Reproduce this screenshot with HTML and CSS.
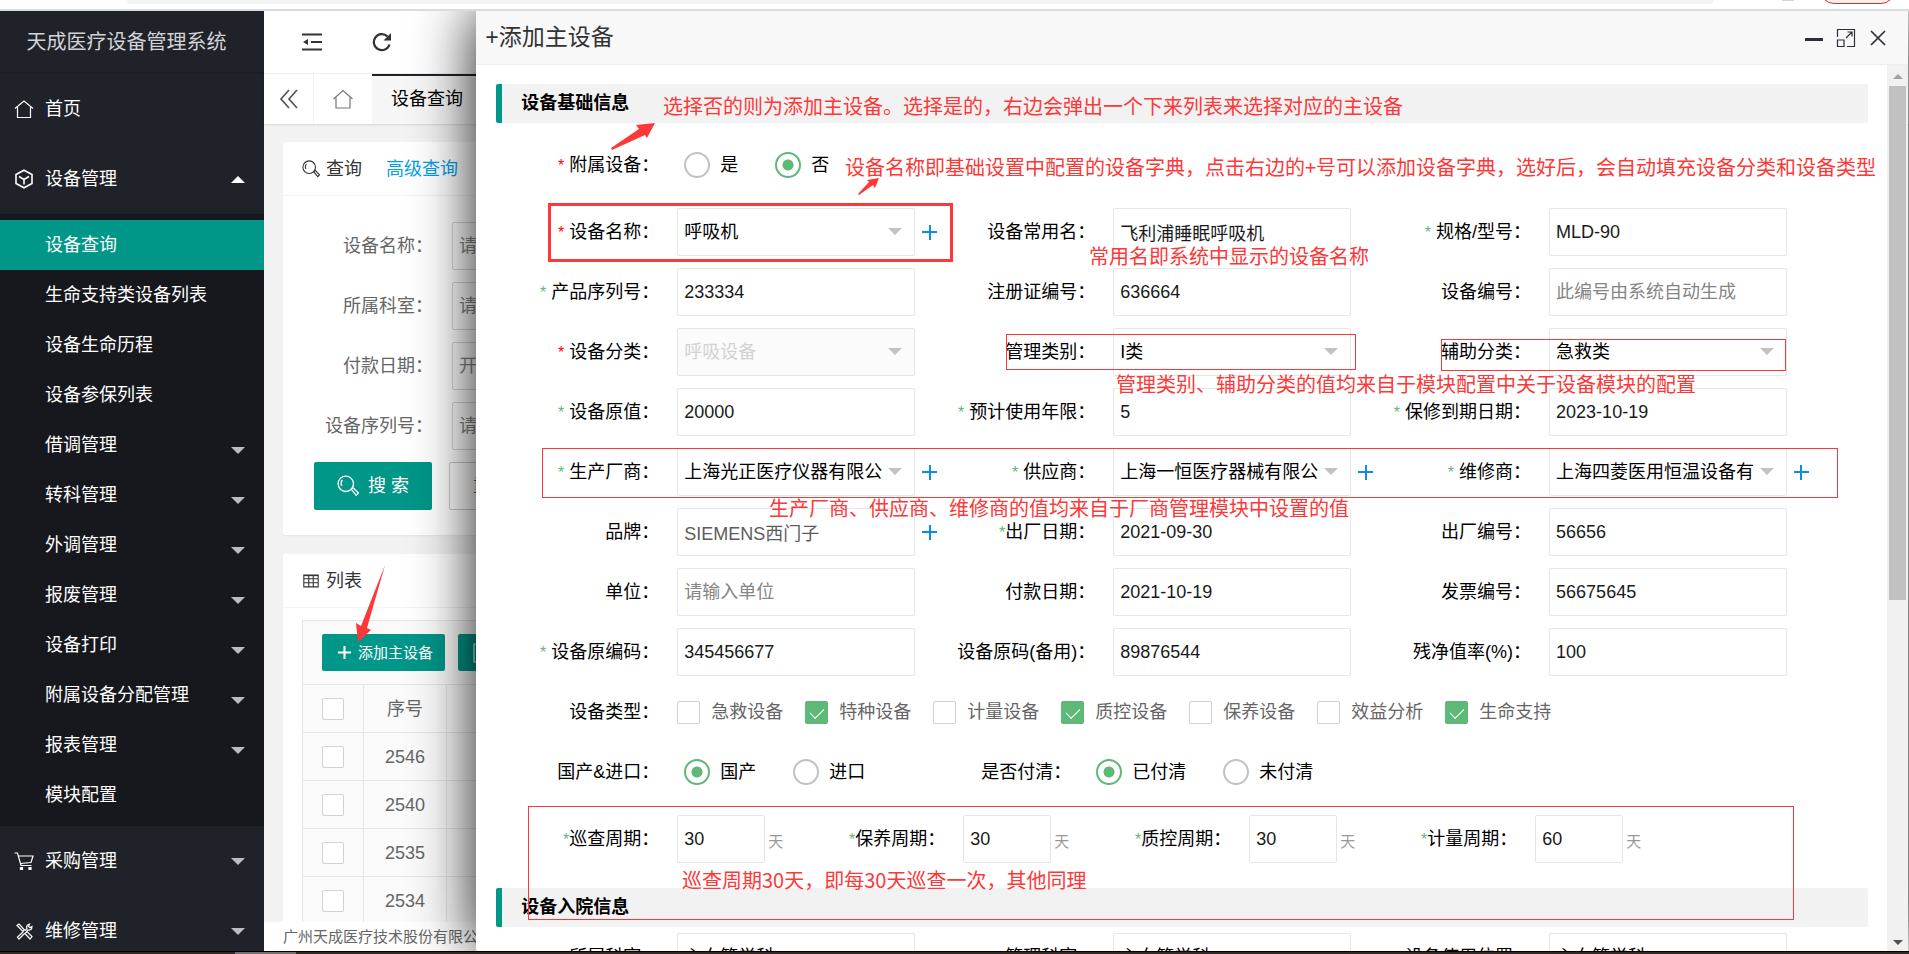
FILE: index.html
```html
<!DOCTYPE html>
<html lang="zh-CN">
<head>
<meta charset="utf-8">
<title>天成医疗设备管理系统</title>
<link rel="stylesheet" href="styles.css">
</head>
<body>
<div class="chrome"><span class="chrome-address"></span><span class="chrome-avatar"></span><span class="chrome-update"></span></div>

<div class="app">
  <aside class="sidebar">
    <h1 class="logo">天成医疗设备管理系统</h1>
    <nav>
      <a class="nav-item" href="#"><svg class="icon" viewBox="0 0 20 20"><path d="M1 9.500 10 2l9 7.500M3.500 8v10.500h13V8"/></svg><span>首页</span></a>
      <a class="nav-item" href="#"><svg class="icon icon-bold" viewBox="0 0 20 20"><path d="M10 1.200 18 5.500v9L10 18.800 2 14.500v-9zM5 7.500 10 10.500l5-3M10 10.500V15.500"/></svg><span>设备管理</span><i class="caret caret-up"></i></a>
      <div class="subnav">
        <a class="sub-item active" href="#">设备查询</a>
        <a class="sub-item" href="#">生命支持类设备列表</a>
        <a class="sub-item" href="#">设备生命历程</a>
        <a class="sub-item" href="#">设备参保列表</a>
        <a class="sub-item" href="#">借调管理<i class="caret"></i></a>
        <a class="sub-item" href="#">转科管理<i class="caret"></i></a>
        <a class="sub-item" href="#">外调管理<i class="caret"></i></a>
        <a class="sub-item" href="#">报废管理<i class="caret"></i></a>
        <a class="sub-item" href="#">设备打印<i class="caret"></i></a>
        <a class="sub-item" href="#">附属设备分配管理<i class="caret"></i></a>
        <a class="sub-item" href="#">报表管理<i class="caret"></i></a>
        <a class="sub-item" href="#">模块配置</a>
      </div>
      <a class="nav-item" href="#"><svg class="icon" viewBox="0 0 20 20"><path d="M.5 2h3l3.500 12.500h10.500M4.500 5h14.500l-2 6.500-10.500 1"/><path d="M6.500 16.500h2v2h-2zM15 16.500h2v2h-2z" fill="currentColor"/></svg><span>采购管理</span><i class="caret"></i></a>
      <a class="nav-item" href="#"><svg class="icon" viewBox="0 0 20 20"><path d="M3 4.500 5 3l5.500 6L9 10.500zM11 12.500l2-2 5 5-2 2.500zM9 11l-5.500 5 1.500 2 5.500-5.500M11 9.500l2-2c-1-2 0-4 2.500-4.500L14.500 5.500l1.500 1 2-1c0 3-2 4-4 3.500l-1.500 1.500"/></svg><span>维修管理</span><i class="caret"></i></a>
    </nav>
  </aside>

  <main class="main">
    <header class="topbar">
      <button class="icon-button" type="button" aria-label="收起菜单"><svg class="icon icon-dark" viewBox="0 0 20 20"><path d="M0 2.500h20M9 10h11M0 17.500h20"/><path d="M1 10l5-3v6z" fill="currentColor" stroke="none"/></svg></button>
      <button class="icon-button" type="button" aria-label="刷新"><svg class="icon icon-dark" viewBox="0 0 20 20"><path d="M17.500 12.500A8 8 0 1 1 15.500 4.500"/><path d="M19 1v7.500h-7.500z" fill="currentColor" stroke="none"/></svg></button>
    </header>
    <div class="tabs">
      <button class="tab-arrow" type="button" aria-label="向左"><svg class="icon icon-mid" viewBox="0 0 20 20"><path d="M10 1 2 10l8 9M18 1l-8 9 8 9"/></svg></button>
      <a class="tab-home" href="#" aria-label="首页"><svg class="icon" viewBox="0 0 20 20"><path d="M.5 10 10 1.500l9.500 8.500M3 8.500V19h14V8.500"/></svg></a>
      <a class="tab-current" href="#">设备查询</a>
    </div>
    <div class="content">
      <section class="card">
        <div class="card-head"><svg class="icon icon-small" viewBox="0 0 20 20"><circle cx="8" cy="8" r="7"/><path d="M4.500 10A4.500 4.500 0 0 1 5 4.500M13 13l1.500-1.500 5 5-2 2z"/></svg><span>查询</span><a class="card-link" href="#">高级查询</a></div>
        <form class="search-form">
          <div class="search-row"><label for="q1">设备名称：</label><input id="q1" class="input" placeholder="请输入设备名称"></div>
          <div class="search-row"><label for="q2">所属科室：</label><input id="q2" class="input" placeholder="请选择科室"></div>
          <div class="search-row"><label for="q3">付款日期：</label><input id="q3" class="input" placeholder="开始日期"></div>
          <div class="search-row"><label for="q4">设备序列号：</label><input id="q4" class="input" placeholder="请输入序列号"></div>
          <div class="search-actions">
            <button class="button" type="button"><svg class="icon icon-search" viewBox="0 0 20 20"><circle cx="8" cy="8" r="7"/><path d="M4.500 10A4.500 4.500 0 0 1 5 4.500M13 13l1.500-1.500 5 5-2 2z"/></svg>搜 索</button>
            <button class="button button-plain" type="button">重 置</button>
          </div>
        </form>
      </section>
      <section class="card">
        <div class="card-head"><svg class="icon icon-small" viewBox="0 0 20 20"><path d="M2 3.500h16v13H2zM2 7.500h16M2 12h16M7.500 4v12.500M12.500 4v12.500"/><path d="M2 4h16"/></svg><span>列表</span></div>
        <div class="grid">
          <div class="grid-tools">
            <button class="button button-small" type="button"><svg class="icon icon-tool icon-dark" viewBox="0 0 16 16"><path d="M8 1v14M1 8h14"/></svg>添加主设备</button>
            <button class="button button-small" type="button"><svg class="icon icon-copy" viewBox="0 0 16 20"><path d="M12 17v2H1V1h9v3M5 4h10v13H5z"/></svg>复制</button>
          </div>
          <table class="grid-table">
            <thead><tr><th class="col-check"><input class="check" type="checkbox" aria-label="全选"></th><th class="col-no">序号</th><th></th></tr></thead>
            <tbody>
              <tr><td><input class="check" type="checkbox" aria-label="2546"></td><td>2546</td><td></td></tr>
              <tr><td><input class="check" type="checkbox" aria-label="2540"></td><td>2540</td><td></td></tr>
              <tr><td><input class="check" type="checkbox" aria-label="2535"></td><td>2535</td><td></td></tr>
              <tr><td><input class="check" type="checkbox" aria-label="2534"></td><td>2534</td><td></td></tr>
            </tbody>
          </table>
        </div>
      </section>
    </div>
    <footer class="footer">广州天成医疗技术股份有限公司</footer>
  </main>

  <section class="dialog" role="dialog" aria-labelledby="dialog-title">
    <header class="dialog-head">
      <h2 id="dialog-title">+添加主设备</h2>
      <div class="dialog-controls">
        <button type="button" aria-label="最小化"><svg class="icon icon-thick" viewBox="0 0 20 20"><path d="M1 11.500h18"/></svg></button>
        <button type="button" aria-label="最大化"><svg class="icon" viewBox="0 0 20 20"><path d="M1.500 9V1.500h17v17H11M1.500 12H8v6.500H1.500zM10 10l6-6M11.500 4H16v4.500"/></svg></button>
        <button type="button" aria-label="关闭"><svg class="icon icon-mid" viewBox="0 0 20 20"><path d="M3 3l14 14M17 3 3 17"/></svg></button>
      </div>
    </header>
    <div class="dialog-body">
      <form class="form">
        <h3 class="section-title">设备基础信息</h3>
        <div class="row row-first">
          <span class="label"><i class="star">*</i> 附属设备：</span>
          <div class="options">
            <label class="option"><input class="radio" type="radio" name="attached">是</label>
            <label class="option"><input class="radio" type="radio" name="attached" checked>否</label>
          </div>
        </div>
        <div class="fields">
          <div class="field"><label class="label" for="f1"><i class="star">*</i> 设备名称：</label><span class="select"><select id="f1"><option>呼吸机</option></select></span><button class="plus" type="button" aria-label="添加"></button></div>
          <div class="field"><label class="label" for="f2">设备常用名：</label><input id="f2" class="input" value="飞利浦睡眠呼吸机"></div>
          <div class="field"><label class="label" for="f3"><i class="star star-green">*</i> 规格/型号：</label><input id="f3" class="input" value="MLD-90"></div>

          <div class="field"><label class="label" for="f4"><i class="star star-green">*</i> 产品序列号：</label><input id="f4" class="input" value="233334"></div>
          <div class="field"><label class="label" for="f5">注册证编号：</label><input id="f5" class="input" value="636664"></div>
          <div class="field"><label class="label" for="f6">设备编号：</label><input id="f6" class="input" placeholder="此编号由系统自动生成"></div>

          <div class="field"><label class="label" for="f7"><i class="star">*</i> 设备分类：</label><span class="select"><select id="f7" disabled><option>呼吸设备</option></select></span></div>
          <div class="field"><label class="label" for="f8">管理类别：</label><span class="select"><select id="f8"><option>I类</option></select></span></div>
          <div class="field"><label class="label" for="f9">辅助分类：</label><span class="select"><select id="f9"><option>急救类</option></select></span></div>

          <div class="field"><label class="label" for="f10"><i class="star star-green">*</i> 设备原值：</label><input id="f10" class="input" value="20000"></div>
          <div class="field"><label class="label" for="f11"><i class="star star-green">*</i> 预计使用年限：</label><input id="f11" class="input" value="5"></div>
          <div class="field"><label class="label" for="f12"><i class="star star-green">*</i> 保修到期日期：</label><input id="f12" class="input" value="2023-10-19"></div>

          <div class="field"><label class="label" for="f13"><i class="star star-green">*</i> 生产厂商：</label><span class="select"><select id="f13"><option>上海光正医疗仪器有限公</option></select></span><button class="plus" type="button" aria-label="添加"></button></div>
          <div class="field"><label class="label" for="f14"><i class="star star-green">*</i> 供应商：</label><span class="select"><select id="f14"><option>上海一恒医疗器械有限公</option></select></span><button class="plus" type="button" aria-label="添加"></button></div>
          <div class="field"><label class="label" for="f15"><i class="star star-green">*</i> 维修商：</label><span class="select"><select id="f15"><option>上海四菱医用恒温设备有</option></select></span><button class="plus" type="button" aria-label="添加"></button></div>

          <div class="field"><label class="label" for="f16">品牌：</label><input id="f16" class="input input-brand" value="SIEMENS西门子"><button class="plus" type="button" aria-label="添加"></button></div>
          <div class="field"><label class="label" for="f17"><i class="star star-green">*</i>出厂日期：</label><input id="f17" class="input" value="2021-09-30"></div>
          <div class="field"><label class="label" for="f18">出厂编号：</label><input id="f18" class="input" value="56656"></div>

          <div class="field"><label class="label" for="f19">单位：</label><input id="f19" class="input" placeholder="请输入单位"></div>
          <div class="field"><label class="label" for="f20">付款日期：</label><input id="f20" class="input" value="2021-10-19"></div>
          <div class="field"><label class="label" for="f21">发票编号：</label><input id="f21" class="input" value="56675645"></div>

          <div class="field"><label class="label" for="f22"><i class="star star-green">*</i> 设备原编码：</label><input id="f22" class="input" value="345456677"></div>
          <div class="field"><label class="label" for="f23">设备原码(备用)：</label><input id="f23" class="input" value="89876544"></div>
          <div class="field"><label class="label" for="f24">残净值率(%)：</label><input id="f24" class="input" value="100"></div>
        </div>
        <div class="row">
          <span class="label">设备类型：</span>
          <div class="checks">
            <label><input class="check" type="checkbox">急救设备</label>
            <label><input class="check" type="checkbox" checked>特种设备</label>
            <label><input class="check" type="checkbox">计量设备</label>
            <label><input class="check" type="checkbox" checked>质控设备</label>
            <label><input class="check" type="checkbox">保养设备</label>
            <label><input class="check" type="checkbox">效益分析</label>
            <label><input class="check" type="checkbox" checked>生命支持</label>
          </div>
        </div>
        <div class="row row-origin">
          <span class="label">国产&amp;进口：</span>
          <div class="options">
            <label class="option"><input class="radio" type="radio" name="origin" checked>国产</label>
            <label class="option"><input class="radio" type="radio" name="origin">进口</label>
          </div>
          <span class="label">是否付清：</span>
          <div class="options">
            <label class="option"><input class="radio" type="radio" name="paid" checked>已付清</label>
            <label class="option"><input class="radio" type="radio" name="paid">未付清</label>
          </div>
        </div>
        <div class="row row-period">
          <label class="label" for="p1"><i class="star star-green">*</i>巡查周期：</label><input id="p1" class="input" value="30"><span class="unit">天</span>
          <label class="label" for="p2"><i class="star star-green">*</i>保养周期：</label><input id="p2" class="input" value="30"><span class="unit">天</span>
          <label class="label" for="p3"><i class="star star-green">*</i>质控周期：</label><input id="p3" class="input" value="30"><span class="unit">天</span>
          <label class="label" for="p4"><i class="star star-green">*</i>计量周期：</label><input id="p4" class="input" value="60"><span class="unit">天</span>
        </div>
        <h3 class="section-title">设备入院信息</h3>
        <div class="fields">
          <div class="field"><label class="label" for="g1"><i class="star">*</i> 所属科室：</label><span class="select select-bare"><select id="g1"><option>心血管学科</option></select></span></div>
          <div class="field"><label class="label" for="g2">管理科室：</label><span class="select select-bare"><select id="g2"><option>心血管学科</option></select></span></div>
          <div class="field"><label class="label" for="g3">设备使用位置：</label><span class="select select-bare"><select id="g3"><option>心血管学科</option></select></span></div>
        </div>
      </form>
      <div class="scrollbar" aria-hidden="true"><span class="scroll-up"></span><span class="scroll-thumb"></span><span class="scroll-down"></span></div>
    </div>
  </section>
</div>
<div class="taskbar"><span></span></div>

<div class="notes">
  <span class="frame frame-name"></span>
  <span class="frame frame-manage"></span>
  <span class="frame frame-assist"></span>
  <span class="frame frame-vendor"></span>
  <span class="frame frame-period"></span>
  <p class="note note-attached">选择否的则为添加主设备。选择是的，右边会弹出一个下来列表来选择对应的主设备</p>
  <p class="note note-name">设备名称即基础设置中配置的设备字典，点击右边的+号可以添加设备字典，选好后，会自动填充设备分类和设备类型</p>
  <p class="note note-common">常用名即系统中显示的设备名称</p>
  <p class="note note-manage">管理类别、辅助分类的值均来自于模块配置中关于设备模块的配置</p>
  <p class="note note-vendor">生产厂商、供应商、维修商的值均来自于厂商管理模块中设置的值</p>
  <p class="note note-period">巡查周期30天，即每30天巡查一次，其他同理</p>
  <svg class="arrow arrow-attached" viewBox="0 0 44 27"><path d="M44 0 36 15 34 12 1 27 0 25 28 6 25 2z"/></svg>
  <svg class="arrow arrow-name" viewBox="0 0 21 17"><path d="M21 0 17 10 15 7 1 17 0 16 11 4 9 2z"/></svg>
  <svg class="arrow arrow-add" viewBox="0 0 29 77"><path d="M29 0 11 63 15 65 2 77 0 58 5 61z"/></svg>
</div>
</body>
</html>
```
FILE: styles.css
```css
* { box-sizing: border-box; }
body {
  margin: 0;
  height: 100vh;
  display: flex;
  flex-direction: column;
  overflow: hidden;
  position: relative;
  background: #f2f2f2;
  color: #333;
  font: 18px/24px "Liberation Sans", "Noto Sans CJK SC", sans-serif;
}
h1, h2, h3, p { margin: 0; font-weight: 400; }
a { color: inherit; text-decoration: none; }
button, input, select { font: inherit; color: inherit; }
button { border: 0; background: none; padding: 0; }
i { font-style: normal; }
.icon { width: 20px; height: 20px; flex: none; fill: none; stroke: currentColor; stroke-width: 1.2; }
.icon-small { width: 18px; height: 18px; }
.icon-tool { width: 15px; height: 15px; }
.icon-copy { width: 16px; height: 20px; }
.icon-search { width: 22px; height: 22px; }
.icon-mid { stroke-width: 1.7; }
.icon-bold { stroke-width: 1.6; }
.icon-dark { stroke-width: 2.2; }
.icon-thick { stroke-width: 3; }

/* browser edge */
.chrome { flex: none; display: flex; height: 11px; background: #fff; border-bottom: 2px solid #dadbe0; overflow: hidden; padding: 0 14px 0 127px; }
.chrome-address { flex: 1; height: 4px; background: #f1f3f4; border-radius: 0 0 14px 14px; }
.chrome-avatar { width: 12px; height: 1px; margin: 0 26px 0 68px; background: #d5d5de; }
.chrome-update { width: 75px; height: 28px; margin-top: -24px; border: 1px solid #d0342c; border-radius: 14px; background: #fbeeee; }
.taskbar { flex: none; height: 3px; background: #33291f; border-top: 1px solid #000; }
.taskbar span { display: block; width: 61px; height: 2px; margin-left: 235px; background: #77706a; }

.app { flex: 1; min-height: 0; display: flex; position: relative; overflow: hidden; }

/* sidebar */
.sidebar { width: 264px; flex: none; overflow: hidden; background: #20222a; color: #fff; }
.logo { height: 63px; font-size: 20px; line-height: 62px; text-align: center; color: #d2d3d4; padding-right: 11px; border-bottom: 2px solid #1c1e25; }
.nav-item { display: flex; align-items: center; height: 70px; padding: 0 19px 0 14px; gap: 11px; }
.caret { margin-left: auto; border: 7px solid transparent; border-top-color: #bcbdbf; border-bottom-width: 0; }
.caret-up { border-top-width: 0; border-bottom: 7px solid #fff; }
.subnav { padding: 6px 0; background: #17181d; }
.sub-item { display: flex; align-items: center; height: 50px; padding: 0 19px 0 45px; }
.sub-item .caret { margin-top: 10px; }
.sub-item.active { background: #009688; }

/* main area */
.main { flex: 1; min-width: 0; display: flex; flex-direction: column; }
.topbar { flex: none; display: flex; align-items: center; gap: 48px; height: 63px; padding: 0 37px 0 37px; background: #fff; border-bottom: 1px solid #f2f2f2; }
.icon-button { display: flex; padding: 0 1px; color: #333; }
.tabs { flex: none; display: flex; height: 50px; background: #fff; box-shadow: 0 1px 2px rgba(0, 0, 0, .12); }
.tab-arrow { width: 50px; display: flex; align-items: center; justify-content: center; border-right: 1px solid #f2f2f2; color: #555; }
.tab-home { width: 58px; display: flex; align-items: center; justify-content: center; color: #777; }
.tab-current { padding: 11px 19px; border-top: 2px solid #20222a; background: #f6f6f6; color: #000; }
.content { flex: 1; min-height: 0; overflow: hidden; padding: 18px 19px 0; display: flex; flex-direction: column; gap: 19px; }
.card { flex: none; background: #fff; border-radius: 2px; box-shadow: 0 1px 2px rgba(0, 0, 0, .06); }
.card-head { display: flex; align-items: center; height: 54px; padding: 0 19px; gap: 6px; border-bottom: 1px solid #f3f3f3; }
.card-link { margin-left: 18px; color: #01a0e4; }
.search-form { display: grid; gap: 12px; padding: 26px 31px 25px; }
.search-row { display: flex; align-items: center; height: 48px; color: #666; }
.search-row label { flex: none; width: 119px; margin-right: 19px; text-align: right; }
.search-actions { display: flex; gap: 17px; }
.button { display: flex; align-items: center; height: 48px; padding: 0 23px; gap: 9px; border-radius: 2px; background: #009688; color: #fff; }
.button-plain { background: #fff; border: 1px solid #c9c9c9; color: #555; }
.button-small { height: 37px; padding: 0 12px 0 15px; gap: 6px; font-size: 15px; }
.grid { margin: 12px 19px; border: 1px solid #e6e6e6; background: #fafafa; }
.grid-tools { display: flex; gap: 13px; padding: 13px 19px; height: 63px; }
.grid-table { width: 100%; border-collapse: separate; border-spacing: 0; table-layout: fixed; color: #666; text-align: center; }
.grid-table th, .grid-table td { height: 48px; padding: 0; border: solid #e6e6e6; border-width: 1px 1px 0 0; font-weight: 400; }
.col-check { width: 61px; }
.col-no { width: 83px; }
.footer { flex: none; height: 29px; padding-left: 19px; background: #fff; color: #666; font-size: 15px; line-height: 30px; }

/* form controls */
.input, .select select { width: 100%; min-width: 0; height: 48px; padding: 0 6px; border: 1px solid #e6e6e6; border-radius: 2px; background: #fff; color: #1a1a1a; }
.input::placeholder { color: #858585; opacity: 1; }
.input-brand { color: #5c5c5c; }
.search-row .input { border-color: #d8d8d8; }
.select { position: relative; display: block; }
.select select { appearance: none; color: #000; opacity: 1; }
.select select:disabled { background: #fbfbfb; color: #d2d2d2; }
.select::after { content: ""; position: absolute; right: 13px; top: 20px; border: 7px solid transparent; border-top-color: #c2c2c2; border-bottom-width: 0; pointer-events: none; }
.select-bare::after { display: none; }
.check { appearance: none; position: relative; display: block; flex: none; width: 23px; height: 23px; margin: 0; border: 1px solid #d2d2d2; border-radius: 2px; background: #fff; }
.grid-table .check { margin: 0 auto; width: 22px; height: 22px; }
.check:checked { background: #5fb878; border-color: #5fb878; }
.check:checked::after { content: ""; position: absolute; left: 7px; top: 3px; width: 7px; height: 12px; border: solid #fff; border-width: 0 1px 1px 0; transform: rotate(45deg); }
.radio { appearance: none; flex: none; width: 26px; height: 26px; margin: 0; border: 2px solid #c2c2c2; border-radius: 50%; background: #fff; }
.radio:checked { border-color: #5fb878; background: radial-gradient(circle, #5fb878 5px, #fff 6px); }

/* dialog */
.dialog { position: absolute; top: 0; right: 1px; bottom: 0; width: 75%; display: flex; flex-direction: column; background: #fff; border-radius: 2px; box-shadow: 0 0 60px rgba(0, 0, 0, .9); color: #000; }
.dialog-head { flex: none; display: flex; justify-content: space-between; height: 54px; padding: 0 20px 0 9px; background: #f8f8f8; border-bottom: 1px solid #eee; }
.dialog-head h2 { font-size: 23px; line-height: 52px; color: #333; }
.dialog-controls { display: flex; align-items: center; gap: 12px; color: #2e2d3c; }
.dialog-controls button { display: flex; }
.dialog-body { flex: 1; min-height: 0; display: flex; }
.form { flex: 1; min-width: 0; height: 100%; overflow: hidden; padding: 19px 19px 0 20px; }
.section-title { height: 39px; margin-bottom: 6px; padding-left: 19px; border-left: 6px solid #009688; border-radius: 2px; background: #f2f2f2; font-size: 18px; font-weight: 700; line-height: 38px; }
.row { display: flex; align-items: center; height: 48px; margin-bottom: 12px; white-space: nowrap; }
.row-first { margin-top: 18px; margin-bottom: 19px; }
.row-origin { margin-bottom: 19px; }
.row-period { margin-bottom: 25px; }
.fields { display: grid; grid-template-columns: repeat(3, 1fr); row-gap: 12px; margin-bottom: 12px; padding-right: 64px; }
.field { display: grid; grid-template-columns: 181px 1fr 17px; align-items: center; height: 48px; }
.label { flex: none; width: 181px; padding-right: 18px; text-align: right; white-space: nowrap; }
.star { color: #f00; font-size: 16px; }
.star-green { color: #5fb878; }
.plus { width: 15px; height: 15px; margin-left: 7px; background: linear-gradient(#0d8ce9, #0d8ce9) center / 15px 2px no-repeat, linear-gradient(#0d8ce9, #0d8ce9) center / 2px 15px no-repeat; }
.options { display: flex; gap: 37px; margin: 0 43px 0 7px; }
.option { display: flex; align-items: center; gap: 10px; }
.checks { display: flex; gap: 22px; color: #666; }
.checks label { display: flex; align-items: center; gap: 11px; }
.row-period .input { width: 88px; flex: none; }
.unit { width: 17px; padding: 6px 0 0 3px; font-size: 15px; line-height: 20px; color: #999; }
.scrollbar { flex: none; width: 21px; display: flex; flex-direction: column; align-items: center; padding: 9px 0 6px; background: #f1f1f1; }
.scroll-up { border: 5px solid transparent; border-top-width: 0; border-bottom-color: #a3a3a3; margin-bottom: 7px; }
.scroll-thumb { width: 17px; height: 59%; background: #c1c1c1; }
.scroll-down { margin-top: auto; border: 5px solid transparent; border-bottom-width: 0; border-top-color: #505050; }

/* callouts laid over the page */
.notes { position: absolute; inset: 0; overflow: hidden; pointer-events: none; color: #fd3838; }
.note { position: absolute; font: 20px/26px "Noto Sans CJK SC", sans-serif; white-space: nowrap; }
.note-attached { left: 663px; top: 93px; }
.note-name { left: 845px; top: 154px; }
.note-common { left: 1089px; top: 243px; }
.note-manage { left: 1116px; top: 371px; }
.note-vendor { left: 769px; top: 495px; }
.note-period { left: 682px; top: 867px; }
.frame { position: absolute; border: 1px solid #fd3838; }
.frame-name { left: 548px; top: 203px; width: 405px; height: 59px; border-width: 3px; }
.frame-manage { left: 1006px; top: 334px; width: 350px; height: 36px; }
.frame-assist { left: 1441px; top: 339px; width: 345px; height: 32px; }
.frame-vendor { left: 542px; top: 448px; width: 1296px; height: 50px; }
.frame-period { left: 528px; top: 806px; width: 1266px; height: 114px; }
.arrow { position: absolute; fill: #fd3838; }
.arrow-attached { left: 611px; top: 123px; width: 44px; height: 27px; }
.arrow-name { left: 858px; top: 178px; width: 21px; height: 17px; }
.arrow-add { left: 356px; top: 565px; width: 29px; height: 77px; }
```
